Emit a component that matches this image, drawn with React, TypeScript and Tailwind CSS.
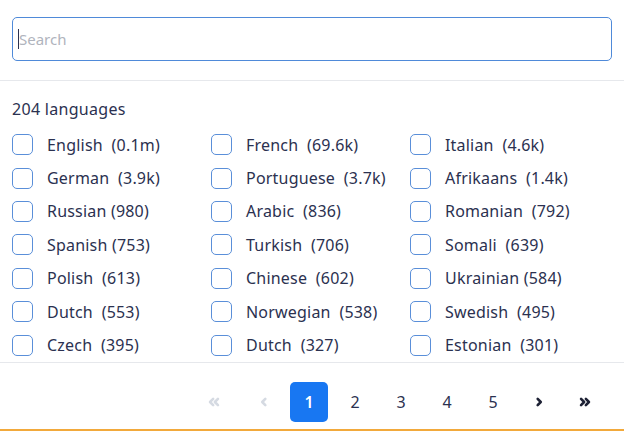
const languages: string[] = [
  "English  (0.1m)",
  "French  (69.6k)",
  "Italian  (4.6k)",
  "German  (3.9k)",
  "Portuguese  (3.7k)",
  "Afrikaans  (1.4k)",
  "Russian (980)",
  "Arabic  (836)",
  "Romanian  (792)",
  "Spanish (753)",
  "Turkish  (706)",
  "Somali  (639)",
  "Polish  (613)",
  "Chinese  (602)",
  "Ukrainian (584)",
  "Dutch  (553)",
  "Norwegian  (538)",
  "Swedish  (495)",
  "Czech  (395)",
  "Dutch  (327)",
  "Estonian  (301)",
];

function Chevron({ double, className }: { double?: boolean; className?: string }) {
  return (
    <svg viewBox="0 0 16 16" className={className} fill="none" stroke="currentColor" strokeWidth={3} strokeLinecap="round" strokeLinejoin="round">
      {double ? (
        <>
          <path d="M3.5 4.5 7 8l-3.5 3.5" />
          <path d="M9 4.5 12.5 8 9 11.5" />
        </>
      ) : (
        <path d="M6.5 4.5 10 8l-3.5 3.5" />
      )}
    </svg>
  );
}

export default function App() {
  return (
    <div className="flex h-[431px] w-[624px] flex-col bg-white text-[#2b3150]" style={{ fontFamily: "'Noto Sans', sans-serif" }}>
      {/* Search */}
      <div className="border-b border-[#e6e8ec] px-3 pb-[19px] pt-[17px]">
        <div className="flex h-[44px] items-center rounded-[5px] border border-[#4f8ad9] px-[5px] text-[15px]">
          <span className="h-[20px] w-px bg-[#2b3150]" />
          <span className="text-[#b0b4bd]">Search</span>
        </div>
      </div>

      {/* Languages */}
      <div className="flex-1 border-b border-[#e6e8ec] px-3 pt-[18px]">
        <div className="text-[16px] leading-[20px] tracking-[0.3px]">204 languages</div>
        <div className="mt-[9px] grid grid-cols-[199px_199px_1fr]">
          {languages.map((lang) => (
            <label key={lang} className="flex h-[33.4px] items-center">
              <span className="h-[21px] w-[21px] shrink-0 rounded-[5px] border-[1.5px] border-[#5a8fd9] bg-white" />
              <span className="ml-[14px] whitespace-pre text-[16px] tracking-[0.2px]">{lang}</span>
            </label>
          ))}
        </div>
      </div>

      {/* Pagination */}
      <div className="flex h-[66px] items-start pl-[190px] pt-[19px]">
        <div className="flex h-[40px] w-[47px] items-center justify-center text-[#d5dae2]">
          <Chevron double className="h-[14px] w-[14px] rotate-180" />
        </div>
        <div className="flex h-[40px] w-[53px] items-center justify-center text-[#d5dae2]">
          <Chevron className="h-[14px] w-[14px] rotate-180" />
        </div>
        <div className="mr-[4px] flex h-[40px] w-[38px] items-center justify-center rounded-[5px] bg-[#1877f2] text-[16px] font-semibold text-white">1</div>
        {["2", "3", "4", "5"].map((n) => (
          <div key={n} className="flex h-[40px] w-[46px] items-center justify-center text-[16px] text-[#2b3150]">
            {n}
          </div>
        ))}
        <div className="flex h-[40px] w-[46px] items-center justify-center text-[#1e2235]">
          <Chevron className="h-[14px] w-[14px]" />
        </div>
        <div className="flex h-[40px] w-[46px] items-center justify-center text-[#1e2235]">
          <Chevron double className="h-[14px] w-[14px]" />
        </div>
      </div>
      <div className="h-[2px] bg-[#f2a93b]" />
    </div>
  );
}
